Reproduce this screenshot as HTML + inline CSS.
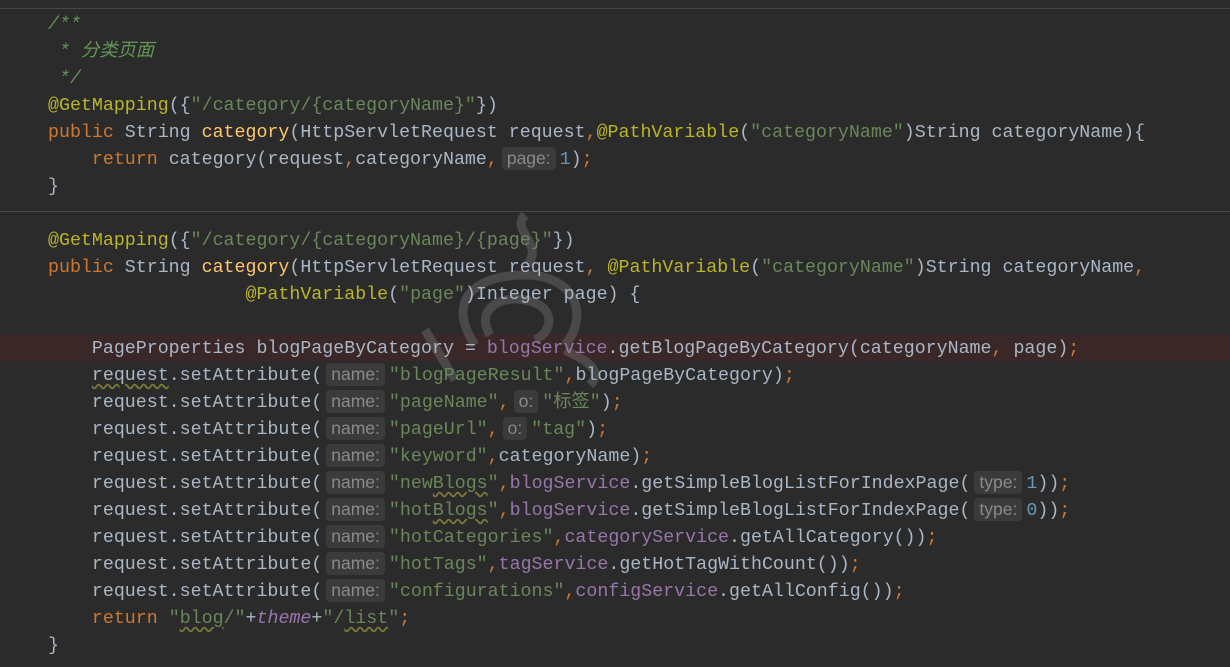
<!DOCTYPE html>
<html><head><meta charset="utf-8"><style>
html,body{margin:0;padding:0;background:#2b2b2b;width:1230px;height:667px;overflow:hidden;position:relative}
pre{margin:0;position:absolute;left:48px;top:12px;font-family:"Liberation Mono","Noto Sans CJK SC",monospace;font-size:18.3px;line-height:27px;color:#a9b7c6;white-space:pre}
.k{color:#cc7832}.s{color:#6a8759}.a{color:#bbb529}.m{color:#ffc66d}.f{color:#9876aa}.c{color:#629755;font-style:italic}.n{color:#6897bb}.i{color:#9876aa;font-style:italic}
.h{display:inline-block;font-family:"Liberation Sans",sans-serif;font-size:17.5px;color:#8a8a8a;background:#3b3b3b;border-radius:4px;padding:0 5px;margin:0 4px;line-height:23px;height:23px;vertical-align:0px;font-style:normal}
.sep{position:absolute;left:0;width:1230px;height:1px;background:#464646}
.hl{position:absolute;left:0;top:334px;width:1230px;height:27px;background:#3a2727}
.u{text-decoration:underline wavy #7a7a3a;text-underline-offset:3px}
</style></head><body>
<div class="sep" style="top:8px"></div>
<div class="sep" style="top:211px"></div>
<div class="hl"></div>
<svg style="position:absolute;left:415px;top:210px" width="200" height="180" viewBox="0 0 200 180" fill="none" stroke="#6e6e6e" stroke-width="9" opacity="0.45">
<path d="M110 5 C95 20 130 35 112 55"/>
<path d="M60 135 C30 90 60 65 110 65 C160 65 175 105 150 135"/>
<path d="M75 125 C60 100 85 85 110 90 C140 95 140 120 120 130"/>
<path d="M10 120 L40 170"/>
<path d="M150 140 C170 150 190 160 175 175"/>
</svg>
<pre><span class="c">/**</span>
<span class="c"> * 分类页面</span>
<span class="c"> */</span>
<span class="a">@GetMapping</span>({<span class="s">"/category/{categoryName}"</span>})
<span class="k">public</span> String <span class="m">category</span>(HttpServletRequest request<span class="k">,</span><span class="a">@PathVariable</span>(<span class="s">"categoryName"</span>)String categoryName){
    <span class="k">return</span> category(request<span class="k">,</span>categoryName<span class="k">,</span><span class="h">page:</span><span class="n">1</span>)<span class="k">;</span>
}

<span class="a">@GetMapping</span>({<span class="s">"/category/{categoryName}/{page}"</span>})
<span class="k">public</span> String <span class="m">category</span>(HttpServletRequest request<span class="k">, </span><span class="a">@PathVariable</span>(<span class="s">"categoryName"</span>)String categoryName<span class="k">,</span>
                  <span class="a">@PathVariable</span>(<span class="s">"page"</span>)Integer page) {

    PageProperties blogPageByCategory = <span class="f">blogService</span>.getBlogPageByCategory(categoryName<span class="k">, </span>page)<span class="k">;</span>
    <span class="u">request</span>.setAttribute(<span class="h">name:</span><span class="s">"blogPageResult"</span><span class="k">,</span>blogPageByCategory)<span class="k">;</span>
    request.setAttribute(<span class="h">name:</span><span class="s">"pageName"</span><span class="k">,</span><span class="h">o:</span><span class="s">"标签"</span>)<span class="k">;</span>
    request.setAttribute(<span class="h">name:</span><span class="s">"pageUrl"</span><span class="k">,</span><span class="h">o:</span><span class="s">"tag"</span>)<span class="k">;</span>
    request.setAttribute(<span class="h">name:</span><span class="s">"keyword"</span><span class="k">,</span>categoryName)<span class="k">;</span>
    request.setAttribute(<span class="h">name:</span><span class="s">"new<span class="u">Blogs</span>"</span><span class="k">,</span><span class="f">blogService</span>.getSimpleBlogListForIndexPage(<span class="h">type:</span><span class="n">1</span>))<span class="k">;</span>
    request.setAttribute(<span class="h">name:</span><span class="s">"hot<span class="u">Blogs</span>"</span><span class="k">,</span><span class="f">blogService</span>.getSimpleBlogListForIndexPage(<span class="h">type:</span><span class="n">0</span>))<span class="k">;</span>
    request.setAttribute(<span class="h">name:</span><span class="s">"hotCategories"</span><span class="k">,</span><span class="f">categoryService</span>.getAllCategory())<span class="k">;</span>
    request.setAttribute(<span class="h">name:</span><span class="s">"hotTags"</span><span class="k">,</span><span class="f">tagService</span>.getHotTagWithCount())<span class="k">;</span>
    request.setAttribute(<span class="h">name:</span><span class="s">"configurations"</span><span class="k">,</span><span class="f">configService</span>.getAllConfig())<span class="k">;</span>
    <span class="k">return</span> <span class="s">"<span class="u">blog</span>/"</span>+<span class="i">theme</span>+<span class="s">"/<span class="u">list</span>"</span><span class="k">;</span>
}</pre>
</body></html>
